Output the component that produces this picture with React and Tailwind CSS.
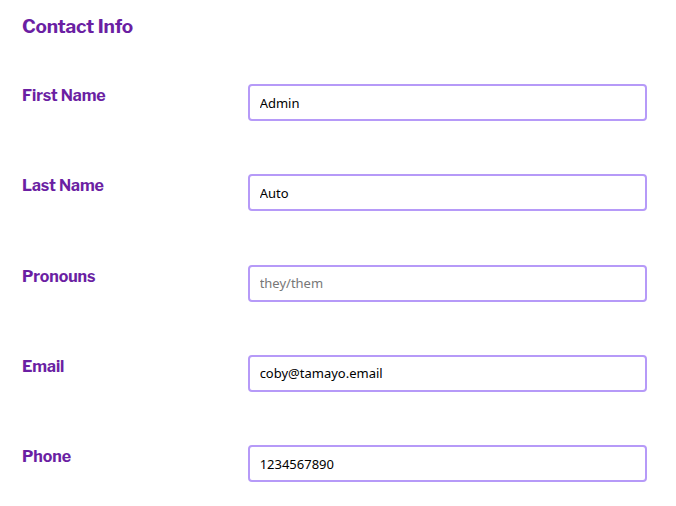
export default function App() {
  const rows = [
    { label: "First Name", value: "Admin" },
    { label: "Last Name", value: "Auto" },
    { label: "Pronouns", value: "", placeholder: "they/them" },
    { label: "Email", value: "coby@tamayo.email" },
    { label: "Phone", value: "1234567890" },
  ];
  return (
    <div className="w-[676px] h-[506px] bg-white pl-[22px] pr-[29px] pt-[15px]" style={{ fontFamily: '"Libre Franklin", Inter, "Liberation Sans", sans-serif' }}>
      <h2 className="text-[19px] leading-[24px] font-bold text-[#6b1fa3] tracking-[-0.2px]">Contact Info</h2>
      <div className="mt-[45px] flex flex-col gap-[53.3px]">
        {rows.map((r) => (
          <div key={r.label} className="flex items-start">
            <label className="w-[226px] pt-[2px] text-[16px] leading-[20px] font-bold text-[#6b1fa3] tracking-[-0.1px]">{r.label}</label>
            <input
              readOnly
              value={r.value}
              placeholder={r.placeholder}
              className="w-[400px] h-[37px] border-2 border-[#b69af8] rounded-[4px] pl-[10px] text-[13px] text-black placeholder:text-[#777] outline-none"
              style={{ fontFamily: '"Noto Sans", "DejaVu Sans", sans-serif' }}
            />
          </div>
        ))}
      </div>
    </div>
  );
}
